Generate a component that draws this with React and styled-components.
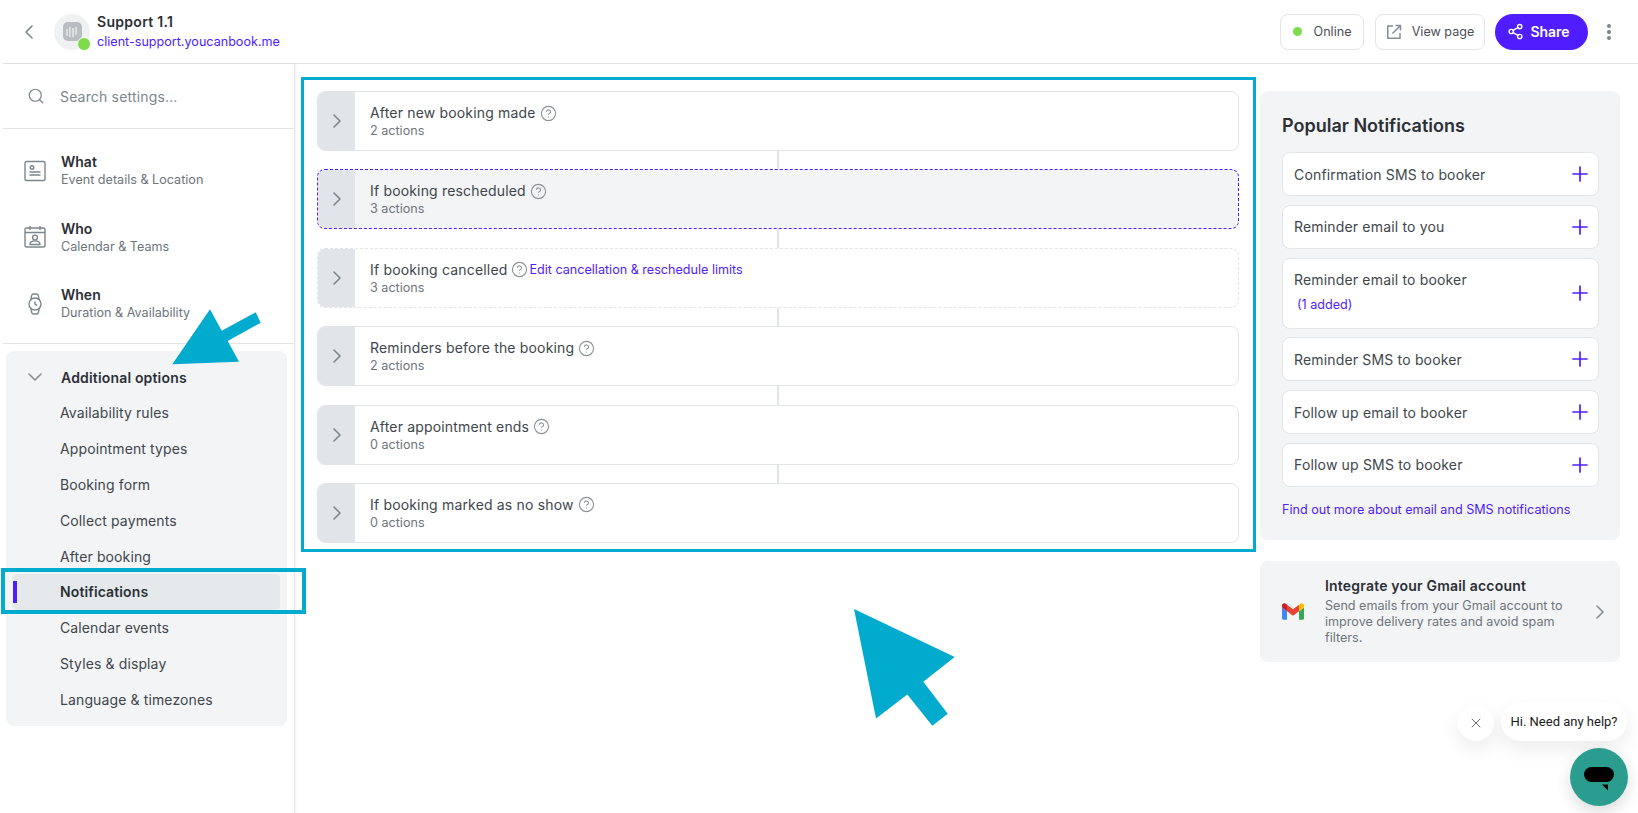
import React from 'react'
import styled, {createGlobalStyle} from 'styled-components'
import {ChevronLeft, ChevronRight, ChevronDown, Search, CircleHelp, Plus, X, Share2, Watch} from 'lucide-react'

const accent = '#4f1dff'
const annotation = '#00abcd'

const GlobalStyle = createGlobalStyle`
    html, body {
        margin: 0;
        padding: 0;
        background: #fff;
    }
    body {
        font-family: Inter, "Liberation Sans", sans-serif;
        color: #2f343a;
    }
    * {
        box-sizing: border-box;
    }
`

const navMain = [
    {title: 'What', sub: 'Event details & Location', icon: 'what'},
    {title: 'Who', sub: 'Calendar & Teams', icon: 'who'},
    {title: 'When', sub: 'Duration & Availability', icon: 'when'},
]

const navExtra = ['Availability rules', 'Appointment types', 'Booking form', 'Collect payments', 'After booking', 'Notifications', 'Calendar events', 'Styles & display', 'Language & timezones']

const rows = [
    {title: 'After new booking made', sub: '2 actions'},
    {title: 'If booking rescheduled', sub: '3 actions', variant: 'active'},
    {title: 'If booking cancelled', sub: '3 actions', variant: 'muted', link: 'Edit cancellation & reschedule limits'},
    {title: 'Reminders before the booking', sub: '2 actions'},
    {title: 'After appointment ends', sub: '0 actions'},
    {title: 'If booking marked as no show', sub: '0 actions'},
]

const popular = [
    {label: 'Confirmation SMS to booker'},
    {label: 'Reminder email to you'},
    {label: 'Reminder email to booker', added: '(1 added)'},
    {label: 'Reminder SMS to booker'},
    {label: 'Follow up email to booker'},
    {label: 'Follow up SMS to booker'},
]

const CardIcon = () => (
    <svg width="24" height="24" viewBox="0 0 24 24" fill="none" stroke="#7d868c" strokeWidth="1.4">
        <rect x="2" y="2.5" width="20" height="19" rx="1.5"/>
        <circle cx="9" cy="8.5" r="1.8"/>
        <path d="M6.5 13h11M6.5 16h11"/>
    </svg>
)

const CalendarIcon = () => (
    <svg width="24" height="24" viewBox="0 0 24 24" fill="none" stroke="#7d868c" strokeWidth="1.4">
        <rect x="2" y="3" width="20" height="19" rx="1.5"/>
        <path d="M2 7.5h20M7 1v4M17 1v4"/>
        <circle cx="12" cy="12.5" r="2.4"/>
        <path d="M7 19.5c0-2.4 2-3.6 5-3.6s5 1.2 5 3.6z"/>
    </svg>
)

const GmailIcon = () => (
    <svg width="22" height="17" viewBox="52 42 88 66">
        <path fill="#4285f4" d="M58 108h14V74L52 59v43c0 3.32 2.69 6 6 6"/>
        <path fill="#34a853" d="M120 108h14c3.32 0 6-2.69 6-6V59l-20 15"/>
        <path fill="#fbbc04" d="M120 48v26l20-15v-8c0-7.42-8.47-11.65-14.4-7.2"/>
        <path fill="#ea4335" d="M72 74V48l24 18 24-18v26L96 92"/>
        <path fill="#c5221f" d="M52 51v8l20 15V48l-5.6-4.2c-5.94-4.45-14.4-.22-14.4 7.2"/>
    </svg>
)

const ExternalIcon = () => (
    <svg width="16" height="16" viewBox="0 0 16 16" fill="none" stroke="#868e94" strokeWidth="1.5">
        <path d="M7 2H1.800v12.200H14V9"/>
        <path d="M9.500 1.500h5v5M14.300 1.700 6.500 9.500"/>
    </svg>
)

const App = () => {
    return (
        <Page>
            <GlobalStyle/>
            <Header>
                <BackButton><ChevronLeft size={24} strokeWidth={1.6}/></BackButton>
                <Avatar>
                    <AvatarLogo>
                        <svg width="14" height="14" viewBox="0 0 14 14" stroke="#fff" strokeWidth="1" fill="none">
                            <path d="M2 4v7M5 2v10M8 3v9M11 2v8"/>
                        </svg>
                    </AvatarLogo>
                    <StatusBadge/>
                </Avatar>
                <Brand>
                    <BrandName>Support 1.1</BrandName>
                    <BrandLink>client-support.youcanbook.me</BrandLink>
                </Brand>
                <HeaderActions>
                    <OutlineButton $width={84} $gap={12}><StatusDot/>Online</OutlineButton>
                    <OutlineButton $width={110} $gap={10}><ExternalIcon/>View page</OutlineButton>
                    <ShareButton><Share2 size={17} strokeWidth={2}/>Share</ShareButton>
                    <MoreDots><i/><i/><i/></MoreDots>
                </HeaderActions>
            </Header>
            <Body>
                <Sidebar>
                    <SearchRow>
                        <Search size={18} strokeWidth={1.6} color="#7d868c"/>
                        <span>Search settings...</span>
                    </SearchRow>
                    <NavMain>
                        {navMain.map(item=>(
                            <NavItem key={item.title}>
                                <NavIcon>
                                    {item.icon === 'what' && <CardIcon/>}
                                    {item.icon === 'who' && <CalendarIcon/>}
                                    {item.icon === 'when' && <Watch size={24} strokeWidth={1.4} color="#7d868c"/>}
                                </NavIcon>
                                <div>
                                    <NavTitle>{item.title}</NavTitle>
                                    <NavSub>{item.sub}</NavSub>
                                </div>
                            </NavItem>
                        ))}
                    </NavMain>
                    <ExtraPanel>
                        <ExtraHead>
                            <ChevronDown size={24} strokeWidth={1.6} color="#868e94"/>
                            <span>Additional options</span>
                        </ExtraHead>
                        {navExtra.map(name=>(
                            <ExtraItem key={name} $selected={name === 'Notifications'}>{name}</ExtraItem>
                        ))}
                    </ExtraPanel>
                </Sidebar>
                <Main>
                    <RowList>
                        {rows.map((row, i)=>(
                            <React.Fragment key={row.title}>
                                {i > 0 && <Connector/>}
                                <Row $variant={row.variant}>
                                    <RowHandle><ChevronRight size={24} strokeWidth={1.6}/></RowHandle>
                                    <RowText>
                                        <RowTitle>
                                            {row.title}
                                            <CircleHelp size={17} strokeWidth={1.6} color="#8d9398"/>
                                            {row.link && <RowLink>{row.link}</RowLink>}
                                        </RowTitle>
                                        <RowSub>{row.sub}</RowSub>
                                    </RowText>
                                </Row>
                            </React.Fragment>
                        ))}
                    </RowList>
                </Main>
                <Aside>
                    <PopularPanel>
                        <PopularTitle>Popular Notifications</PopularTitle>
                        <PopularList>
                            {popular.map(item=>(
                                <PopularItem key={item.label} $tall={!!item.added}>
                                    <PopularLabel $tall={!!item.added}>
                                        <div>{item.label}</div>
                                        {item.added && <Added>{item.added}</Added>}
                                    </PopularLabel>
                                    <Plus size={24} strokeWidth={1.7} color={accent}/>
                                </PopularItem>
                            ))}
                        </PopularList>
                        <PopularLink>Find out more about email and SMS notifications</PopularLink>
                    </PopularPanel>
                    <GmailCard>
                        <GmailIcon/>
                        <GmailText>
                            <GmailTitle>Integrate your Gmail account</GmailTitle>
                            <GmailBody>Send emails from your Gmail account to improve delivery rates and avoid spam filters.</GmailBody>
                        </GmailText>
                        <ChevronRight size={24} strokeWidth={1.6} color="#868e94"/>
                    </GmailCard>
                </Aside>
            </Body>

            <ChatClose><X size={16} strokeWidth={1.3} color="#555"/></ChatClose>
            <ChatBubble>Hi. Need any help?</ChatBubble>
            <ChatButton>
                <svg width="30" height="24" viewBox="0 0 30 24">
                    <rect x="0" y="0" width="30" height="15" rx="7.5" fill="#000"/>
                    <path d="M18 17.5h6v6z" fill="#000"/>
                </svg>
            </ChatButton>

            <MainFrame/>
            <NavFrame/>
            <SmallArrow viewBox="0 0 100 60" width="100" height="60">
                <path d="M38 .3 49.700 21.700 83.700 3.300 88.700 13.700 55.700 32 67 52.700 .3 55.300z" fill={annotation}/>
            </SmallArrow>
            <BigArrow viewBox="0 0 102 118" width="102" height="118">
                <path d="M0 0 100.700 48 69.300 72.700 93.700 104.700 78.300 116.700 53.300 85.400 22 109.400z" fill={annotation}/>
            </BigArrow>
        </Page>
    )
}

export default App

const Page = styled.div`
    position: relative;
    height: 813px;
    overflow: hidden;
    padding-left: 3px;
`

const Header = styled.header`
    display: flex;
    align-items: center;
    height: 64px;
    border-bottom: 1px solid #e3e6e9;
    padding-left: 14px;
    padding-right: 27px;
`

const BackButton = styled.div`
    display: flex;
    color: #7d868c;
    width: 37px;
`

const Avatar = styled.div`
    position: relative;
    display: flex;
    align-items: center;
    justify-content: center;
    width: 36px;
    height: 36px;
    border-radius: 50%;
    background: #f0f1f3;
    margin-right: 7px;
`

const AvatarLogo = styled.div`
    display: flex;
    align-items: center;
    justify-content: center;
    width: 19px;
    height: 19px;
    border-radius: 5px;
    background: #b9bcc0;
`

const StatusBadge = styled.span`
    position: absolute;
    right: -1px;
    bottom: -1px;
    width: 14px;
    height: 14px;
    border-radius: 50%;
    background: #7ddc4a;
    border: 1px solid #fff;
`

const Brand = styled.div`
    display: flex;
    flex-direction: column;
    gap: 2px;
`

const BrandName = styled.div`
    font-size: 14px;
    line-height: 18px;
    font-weight: 600;
    letter-spacing: 0.3px;
    color: #2b3036;
`

const BrandLink = styled.div`
    font-size: 12.600px;
    line-height: 17px;
    color: ${accent};
`

const HeaderActions = styled.div`
    display: flex;
    align-items: center;
    margin-left: auto;
    gap: 11px;
`

const OutlineButton = styled.div`
    display: flex;
    align-items: center;
    justify-content: center;
    gap: ${p=>p.$gap}px;
    width: ${p=>p.$width}px;
    height: 36px;
    border: 1px solid #e1e5e9;
    border-radius: 8px;
    font-size: 12.600px;
    color: #4a5056;
`

const StatusDot = styled.span`
    width: 9px;
    height: 9px;
    border-radius: 50%;
    background: #7ddc4a;
`

const ShareButton = styled.div`
    display: flex;
    align-items: center;
    justify-content: center;
    gap: 6px;
    width: 93px;
    height: 36px;
    margin-left: -1px;
    padding-right: 6px;
    border-radius: 18px;
    background: ${accent};
    color: #fff;
    font-size: 14px;
    font-weight: 600;
`

const MoreDots = styled.div`
    display: flex;
    flex-direction: column;
    gap: 2px;
    width: 4px;
    margin-left: 8px;
    i {
        width: 4px;
        height: 4px;
        border-radius: 50%;
        background: #7d868c;
    }
`

const Body = styled.div`
    display: flex;
    align-items: flex-start;
    height: 749px;
`

const Sidebar = styled.aside`
    width: 292px;
    height: 100%;
    flex-shrink: 0;
    border-right: 1px solid #e3e6e9;
    box-shadow: 1px 0 3px rgba(0, 0, 0, 0.05);
`

const SearchRow = styled.div`
    display: flex;
    align-items: center;
    gap: 15px;
    height: 65px;
    padding-left: 24px;
    border-bottom: 1px solid #e3e6e9;
    font-size: 14px;
    letter-spacing: 0.17px;
    color: #7d868c;
`

const NavMain = styled.nav`
    display: flex;
    flex-direction: column;
    gap: 31.500px;
    height: 215px;
    padding: 24px 0 0 20px;
    border-bottom: 1px solid #e3e6e9;
`

const NavItem = styled.div`
    display: flex;
    align-items: center;
    gap: 14px;
`

const NavIcon = styled.div`
    display: flex;
    width: 24px;
`

const NavTitle = styled.div`
    font-size: 14px;
    line-height: 18px;
    font-weight: 600;
    color: #2b3036;
`

const NavSub = styled.div`
    font-size: 12.600px;
    line-height: 17px;
    color: #6d757b;
`

const ExtraPanel = styled.div`
    margin: 7px 7px 0 3px;
    padding: 8px 7px 0;
    height: 375px;
    border-radius: 8px;
    background: #f3f4f6;
`

const ExtraHead = styled.div`
    display: flex;
    align-items: center;
    gap: 14px;
    height: 36px;
    padding-left: 10px;
    font-size: 14px;
    font-weight: 600;
    letter-spacing: 0.17px;
    color: #2b3036;
`

const ExtraItem = styled.div`
    position: relative;
    display: flex;
    align-items: center;
    height: 35.800px;
    padding-left: 47px;
    border-radius: 4px;
    font-size: 14px;
    letter-spacing: 0.12px;
    font-weight: ${p=>p.$selected ? 600 : 400};
    color: ${p=>p.$selected ? '#2b3036' : '#40464c'};
    background: ${p=>p.$selected ? '#e6e9ec' : 'transparent'};
    ${p=>p.$selected && `
        &::before {
            content: '';
            position: absolute;
            left: 0;
            top: 7px;
            width: 4px;
            height: 22px;
            background: ${accent};
        }
    `}
`

const Main = styled.main`
    width: 965px;
    flex-shrink: 0;
    padding: 27px 21px 0 22px;
`

const RowList = styled.div`
    display: flex;
    flex-direction: column;
`

const Connector = styled.div`
    width: 2px;
    height: 18.400px;
    align-self: center;
    background: #e1e5e9;
`

const Row = styled.div`
    display: flex;
    height: 60px;
    border-radius: 8px;
    overflow: hidden;
    border: 1px ${p=>p.$variant ? 'dashed' : 'solid'} ${p=>p.$variant === 'active' ? accent : '#e1e5e9'};
    background: ${p=>p.$variant === 'active' ? '#f3f4f6' : '#fff'};
`

const RowHandle = styled.div`
    display: flex;
    align-items: center;
    justify-content: center;
    width: 37px;
    background: #e1e5e9;
    color: #7d868c;
`

const RowText = styled.div`
    display: flex;
    flex-direction: column;
    justify-content: center;
    padding: 1px 0 0 15px;
`

const RowTitle = styled.div`
    display: flex;
    align-items: center;
    gap: 4px;
    font-size: 14px;
    line-height: 18px;
    letter-spacing: 0.17px;
    color: #40464c;
`

const RowLink = styled.span`
    margin-left: -3px;
    font-size: 12.600px;
    letter-spacing: 0;
    color: ${accent};
`

const RowSub = styled.div`
    font-size: 12.600px;
    line-height: 17px;
    color: #6d757b;
`

const Aside = styled.div`
    display: flex;
    flex-direction: column;
    gap: 21px;
    width: 360px;
    padding-top: 27px;
`

const PopularPanel = styled.section`
    height: 449px;
    padding: 23px 21px 22px 22px;
    border-radius: 8px;
    background: #f3f4f6;
`

const PopularTitle = styled.h2`
    margin: 0 0 15px;
    font-size: 18px;
    line-height: 23px;
    font-weight: 600;
    color: #2b3036;
`

const PopularList = styled.div`
    display: flex;
    flex-direction: column;
    gap: 8.500px;
`

const PopularItem = styled.div`
    display: flex;
    align-items: center;
    justify-content: space-between;
    height: ${p=>p.$tall ? 71 : 44.300}px;
    padding: 0 6px 0 11px;
    border: 1px solid #e3e6e9;
    border-radius: 8px;
    background: #fff;
    font-size: 14px;
    letter-spacing: 0.17px;
    color: #40464c;
`

const PopularLabel = styled.div`
    padding-bottom: ${p=>p.$tall ? 3 : 0}px;
`

const Added = styled.div`
    margin: 9px 0 0 3px;
    font-size: 12.600px;
    letter-spacing: 0;
    color: ${accent};
`

const PopularLink = styled.div`
    margin-top: 14px;
    font-size: 12.600px;
    line-height: 17px;
    color: ${accent};
`

const GmailCard = styled.section`
    display: flex;
    align-items: center;
    height: 101px;
    padding: 0 8px 0 22px;
    border-radius: 8px;
    background: #f3f4f6;
`

const GmailText = styled.div`
    width: 255px;
    margin: 0 8px 0 21px;
`

const GmailTitle = styled.div`
    margin-bottom: 3px;
    font-size: 14px;
    line-height: 18px;
    font-weight: 600;
    letter-spacing: 0.2px;
    color: #2b3036;
`

const GmailBody = styled.div`
    font-size: 12.600px;
    line-height: 16px;
    color: #6d757b;
`

const ChatClose = styled.div`
    position: absolute;
    left: 1458px;
    top: 705px;
    display: flex;
    align-items: center;
    justify-content: center;
    width: 36px;
    height: 36px;
    border-radius: 50%;
    background: #fff;
    box-shadow: 0 8px 20px rgba(0, 0, 0, 0.08);
`

const ChatBubble = styled.div`
    position: absolute;
    left: 1501px;
    top: 702px;
    display: flex;
    align-items: center;
    justify-content: center;
    width: 126px;
    height: 39px;
    border-radius: 20px;
    background: #fff;
    box-shadow: 0 8px 20px rgba(0, 0, 0, 0.08);
    font-family: Roboto, sans-serif;
    font-size: 13px;
    color: #1a1a1a;
`

const ChatButton = styled.div`
    position: absolute;
    left: 1570px;
    top: 748px;
    display: flex;
    align-items: center;
    justify-content: center;
    width: 58px;
    height: 58px;
    padding-top: 4px;
    border-radius: 50%;
    background: #2a9d8f;
    box-shadow: 0 6px 16px rgba(0, 0, 0, 0.14);
`

const MainFrame = styled.div`
    position: absolute;
    left: 301px;
    top: 77px;
    width: 955px;
    height: 475px;
    border: 3px solid ${annotation};
    pointer-events: none;
`

const NavFrame = styled.div`
    position: absolute;
    left: 1px;
    top: 568px;
    width: 305px;
    height: 46px;
    border: 4px solid ${annotation};
    pointer-events: none;
`

const SmallArrow = styled.svg`
    position: absolute;
    left: 172px;
    top: 309px;
`

const BigArrow = styled.svg`
    position: absolute;
    left: 854px;
    top: 608.700px;
`
